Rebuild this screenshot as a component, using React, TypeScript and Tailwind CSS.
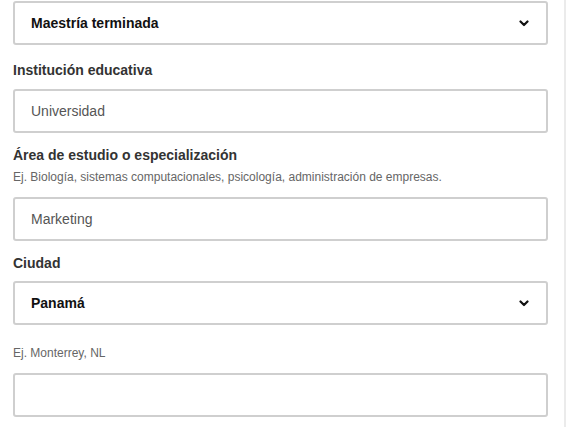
import type { ReactNode } from 'react'

/**
 * Formulario de educación
 * Campos de nivel de estudios, institución, área y ciudad.
 */

function Chevron() {
  return (
    <svg className="shrink-0" width="10" height="7" viewBox="0 0 10 7" fill="none">
      <path d="M1.5 1.5 5 5l3.5-3.5" stroke="#111" strokeWidth="2.2" strokeLinecap="round" strokeLinejoin="round" />
    </svg>
  )
}

function SelectBox({ value }: { value: string }) {
  return (
    <div className="h-[44px] flex items-center justify-between pl-4 pr-[17px] border-2 border-[#cfcfcf] rounded-[3px] bg-white">
      <span className="text-[14px] font-bold text-[#111]">{value}</span>
      <Chevron />
    </div>
  )
}

function InputBox({ value }: { value?: string }) {
  return (
    <div className="h-[44px] flex items-center pl-4 border-2 border-[#cfcfcf] rounded-[3px] bg-white">
      <span className="text-[14px] text-[#555]">{value}</span>
    </div>
  )
}

function Label({ children, className = '' }: { children: ReactNode; className?: string }) {
  return <div className={`text-[14px] leading-[20px] font-bold text-[#333] ${className}`}>{children}</div>
}

function Hint({ children, className = '' }: { children: ReactNode; className?: string }) {
  return <div className={`text-[12px] leading-[16px] text-[#666] ${className}`}>{children}</div>
}

export default function App() {
  return (
    <div className="w-[586px] h-[427px] bg-white overflow-hidden font-['Liberation_Sans',Arial,sans-serif]">
      <div className="w-[566px] h-full border-r-2 border-[#ebebeb] pl-[13px] pr-[16px] pt-px">
        {/* Nivel de estudios */}
        <SelectBox value="Maestría terminada" />

        {/* Institución */}
        <Label className="mt-[15px]">Institución educativa</Label>
        <div className="mt-[9px]">
          <InputBox value="Universidad" />
        </div>

        {/* Área de estudio */}
        <Label className="mt-[12px]">Área de estudio o especialización</Label>
        <Hint className="mt-[4px]">
          Ej. Biología, sistemas computacionales, psicología, administración de empresas.
        </Hint>
        <div className="mt-[12px]">
          <InputBox value="Marketing" />
        </div>

        {/* Ciudad */}
        <Label className="mt-[12px]">Ciudad</Label>
        <div className="mt-[8px]">
          <SelectBox value="Panamá" />
        </div>
        <Hint className="mt-[20px]">Ej. Monterrey, NL</Hint>
        <div className="mt-[12px]">
          <InputBox />
        </div>
      </div>
    </div>
  )
}
